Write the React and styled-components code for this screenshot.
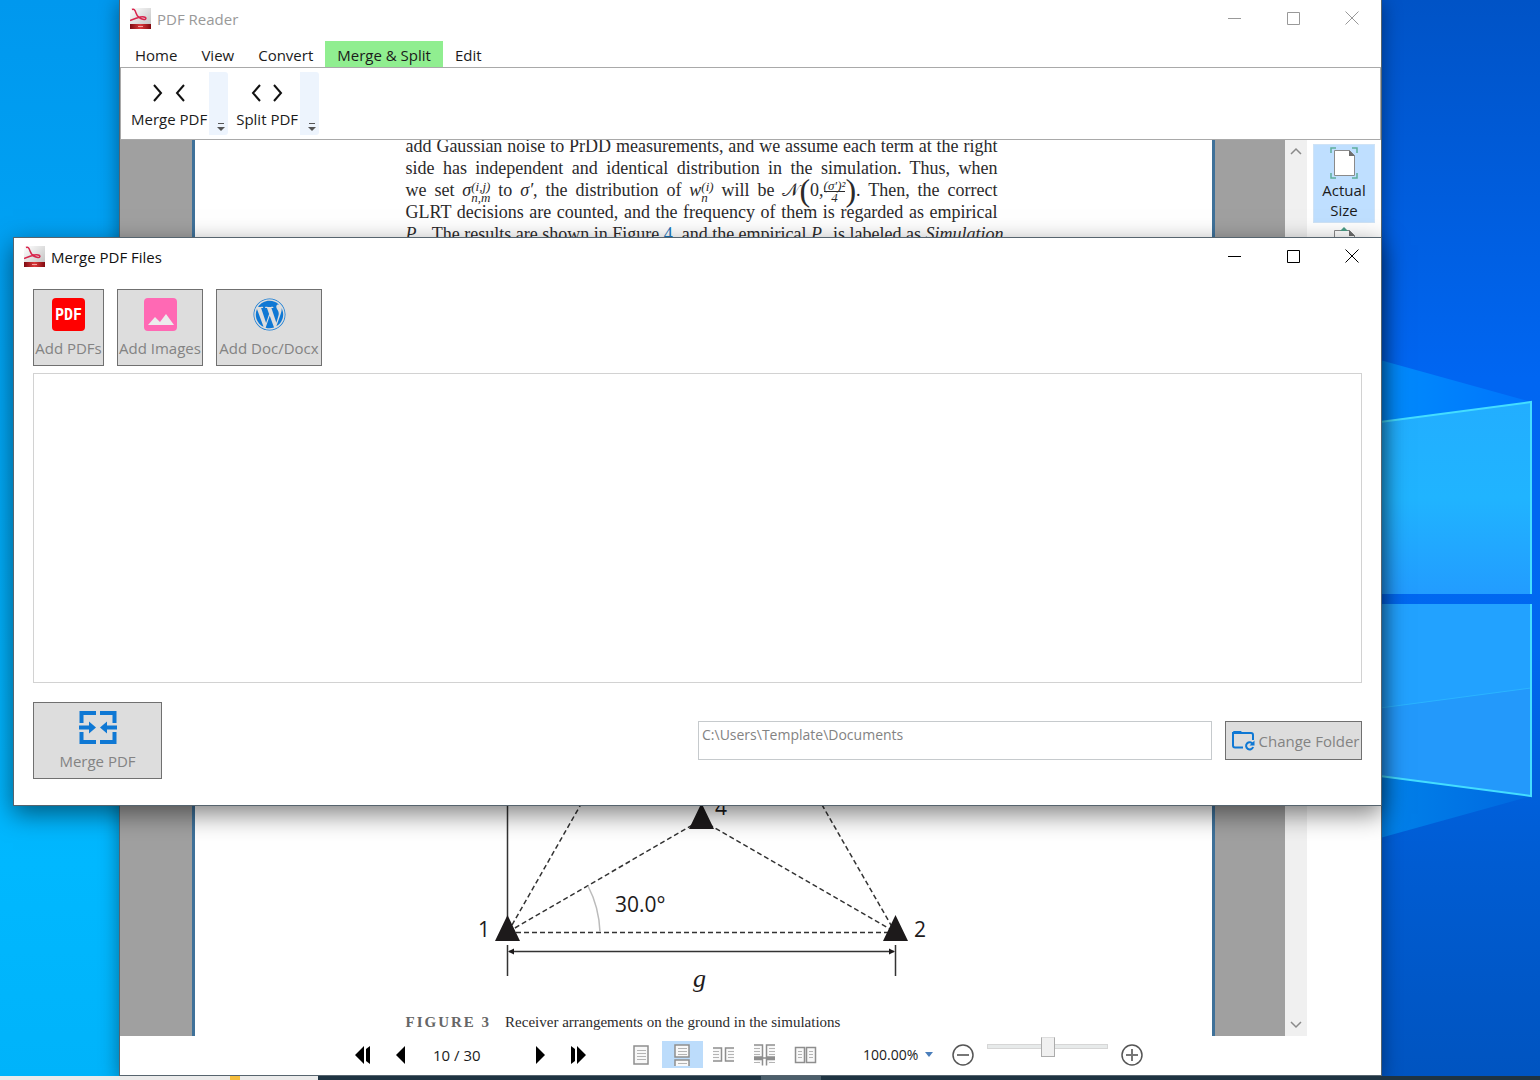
import React, { useState } from 'react'
import styled, { createGlobalStyle } from 'styled-components'
import { FaWordpress } from 'react-icons/fa'

const GlobalStyle = createGlobalStyle`
	* { box-sizing: border-box; }
	html, body, #root { height: 100%; }
	body { margin: 0; overflow: hidden; }
	body, button, input, select {
		font-family: "Open Sans", "Noto Sans", sans-serif;
		font-size: 15px;
		line-height: 20px;
	}
	button, input, select { color: inherit; }
`

const Desktop = styled.div`
	position: relative;
	display: flex;
	flex-direction: column;
	justify-content: flex-end;
	height: 100vh;
	overflow: hidden;
	color: #1b1b1b;
	background: #00a8f8;
`
const Wallpaper = styled.svg`
	position: absolute;
	inset: 0;
	width: 100%;
	height: 100%;
`
const Taskbar = styled.div`
	position: relative;
	display: flex;
	height: 4px;
	background: #1f3442;
`
const TaskSearch = styled.div`
	width: 318px;
	padding-left: 230px;
	background: #ebebeb;

	&::before {
		content: '';
		display: block;
		width: 10px;
		height: 4px;
		background: #f5bd3d;
	}
`
const TaskActive = styled.div`
	width: 60px;
	margin-left: 443px;
	background: #4c5f6b;
`

const Window = styled.section`
	position: absolute;
	display: flex;
	flex-direction: column;
	background: #fff;
	border: 1px solid #56646e;
	box-shadow: 0 4px 18px rgba(0, 0, 0, 0.4);
`
const ReaderWindow = styled(Window)`
	top: -1px;
	left: 119px;
	right: 158px;
	bottom: 4px;
`
const MergeWindow = styled(Window)`
	top: 237px;
	left: 13px;
	right: 158px;
	box-shadow: 0 8px 24px rgba(0, 0, 0, 0.5);
`

const TitleBar = styled.header`
	display: flex;
	align-items: center;
	height: 38px;
	padding-left: 10px;
	color: ${p => (p.$active ? '#111' : '#999')};
`
const Logo = styled.svg`
	margin-bottom: 2px;
`
const Title = styled.h1`
	flex: 1;
	margin: 0 0 0 6px;
	font-size: 15px;
	font-weight: 400;
`
const CaptionButton = styled.button`
	display: flex;
	align-items: center;
	align-self: flex-start;
	justify-content: center;
	width: 59px;
	height: 36px;
	padding: 0;
	border: 0;
	background: none;
`

const Tabs = styled.nav`
	display: flex;
	margin-top: 3px;
	padding-left: 3px;
`
const Tab = styled.button`
	height: 26px;
	padding: 2px 12px 0;
	border: 0;
	background: ${p => (p.$active ? '#90ee90' : 'none')};
`
const Ribbon = styled.div`
	display: flex;
	gap: 6px;
	padding: 4px 8px;
	border: 1px solid #a9a9a9;
`
const RibbonGroup = styled.div`
	display: flex;
`
const RibbonButton = styled.button`
	display: flex;
	flex-direction: column;
	align-items: center;
	justify-content: flex-end;
	gap: 7px;
	height: 63px;
	padding: 0 2px 6px;
	border: 0;
	background: none;
`
const Grip = styled.button`
	display: flex;
	align-items: flex-end;
	justify-content: center;
	width: 19px;
	padding: 0 0 4px 5px;
	border: 0;
	border-radius: 0 3px 3px 0;
	background: #edf4fd;
`

const Body = styled.div`
	display: flex;
	flex: 1;
	min-height: 0;
`
const Viewer = styled.div`
	display: flex;
	flex: 1;
	padding: 0 70px 0 72px;
	background: #a0a0a0;
`
const Page = styled.article`
	display: flex;
	flex: 1;
	flex-direction: column;
	align-items: center;
	padding-right: 4px;
	overflow: hidden;
	background: #fff;
	border: solid #3f7199;
	border-width: 0 3px;
	color: #2b2a2b;
	font-family: "Liberation Serif", serif;
`
const Paragraph = styled.div`
	width: 592px;
	margin-top: -5px;
	font-size: 18px;
	line-height: 22px;
`
const Line = styled.div`
	height: 22px;
	white-space: nowrap;
	text-align-last: justify;

	sub { font-size: 9px; }
`
const Ref = styled.a`
	color: #1b75bb;
	text-decoration: none;
`
const Stack = styled.span`
	display: inline-flex;
	flex-direction: column;
	vertical-align: middle;
	text-align-last: left;
	font-size: 13px;
	font-style: italic;
	line-height: 11px;
`
const Fraction = styled(Stack)`
	text-align-last: center;

	span:first-child { border-bottom: 1px solid #2b2a2b; }
`
const Paren = styled.span`
	display: inline-block;
	height: 22px;
	vertical-align: top;
	font-size: 32px;
	font-weight: 400;
`
const Figure = styled.figure`
	width: 592px;
	margin: auto 0 0;
	padding-bottom: 4px;
`
const Drawing = styled.svg`
	display: block;
	width: 100%;
	overflow: visible;
`
const Caption = styled.figcaption`
	display: flex;
	gap: 14px;
	padding-top: 2px;
	font-size: 15px;
	line-height: 20px;

	b {
		color: #666;
		letter-spacing: 2px;
	}
`
const ScrollBar = styled.div`
	display: flex;
	flex-direction: column;
	justify-content: space-between;
	width: 22px;
	background: #f0f0f0;
`
const ScrollButton = styled.button`
	display: flex;
	align-items: center;
	justify-content: center;
	height: 22px;
	padding: 0;
	border: 0;
	background: none;
`
const SidePanel = styled.aside`
	display: flex;
	flex-direction: column;
	gap: 1px;
	width: 74px;
	padding: 4px 6px 0;
	overflow: hidden;
`
const FitButton = styled.button`
	display: flex;
	flex-direction: column;
	align-items: center;
	gap: 1px;
	flex-shrink: 0;
	height: 79px;
	padding: 2px 0;
	border: 1px solid ${p => (p.$active ? '#cfe3f6' : 'transparent')};
	background: ${p => (p.$active ? '#bfdfff' : 'none')};
`

const StatusBar = styled.footer`
	display: flex;
	align-items: center;
	justify-content: center;
	height: 39px;
	padding: 0 12px 2px 0;
`
const NavButton = styled.button`
	display: flex;
	align-items: center;
	justify-content: center;
	width: 38px;
	height: 26px;
	padding: 0;
	border: 0;
	background: none;
`
const PageInput = styled.input`
	width: 101px;
	padding: 0 13px;
	border: 0;
`
const ViewModes = styled.div`
	display: flex;
	margin: 0 37px 0 24px;
`
const ViewButton = styled(NavButton)`
	width: 41px;
	height: 27px;
	background: ${p => (p.$active ? '#bcdcfb' : 'none')};
`
const ZoomPicker = styled.label`
	display: flex;
	align-items: center;
	gap: 2px;
	width: 74px;
	margin-right: 13px;

	select {
		width: 60px;
		padding: 0;
		border: 0;
		appearance: none;
		background: none;
		font-size: 14px;
	}
`
const RoundButton = styled(NavButton)`
	width: 26px;
`
const ZoomSlider = styled.input`
	align-self: flex-start;
	width: 121px;
	height: 20px;
	margin: 0 11px;
	appearance: none;
	background: none;

	&::-webkit-slider-runnable-track {
		height: 5px;
		border: 1px solid #d6d6d6;
		background: #e7eaea;
	}
	&::-webkit-slider-thumb {
		appearance: none;
		width: 14px;
		height: 20px;
		margin-top: -8px;
		border: 1px solid #acacac;
		border-top-color: #ddd;
		background: #f0f0f0;
	}
`

const MergeContent = styled.div`
	display: flex;
	flex-direction: column;
	padding: 13px 19px 26px;
	color: #838383;
`
const Sources = styled.div`
	display: flex;
	gap: 13px;
`
const TileButton = styled.button`
	display: flex;
	flex-direction: column;
	align-items: center;
	gap: 7px;
	min-width: ${p => p.$width};
	height: 77px;
	padding: 8px 0 0;
	border: 1px solid #707070;
	background: #ddd;
	white-space: nowrap;
`
const FileList = styled.div`
	height: 310px;
	margin: 7px 0 19px;
	border: 1px solid #d2d2d2;
	background: #fff;
`
const Output = styled.div`
	display: flex;
	align-items: center;
	gap: 13px;
`
const PathInput = styled.input`
	width: 514px;
	height: 39px;
	margin-left: auto;
	padding: 2px 3px 14px;
	border: 1px solid #c6cacd;
	background: #fff;
	font-size: 14px;
`
const FolderButton = styled.button`
	display: flex;
	align-items: center;
	justify-content: center;
	gap: 4px;
	width: 137px;
	height: 39px;
	padding: 0 0 0 4px;
	border: 1px solid #707070;
	background: #ddd;
	white-space: nowrap;
`

const AppLogo = () => (
	<Logo width="21" height="21" viewBox="0 0 21 21" aria-hidden="true">
		<defs>
			<linearGradient id="logoPaper" x1="0" y1="0" x2="1" y2="1">
				<stop offset="0" stopColor="#fff" />
				<stop offset="1" stopColor="#bdbdbd" />
			</linearGradient>
			<linearGradient id="logoBand" x1="0" y1="0" x2="1" y2="0">
				<stop offset="0" stopColor="#7d0b12" />
				<stop offset="0.5" stopColor="#dc3a3c" />
				<stop offset="1" stopColor="#80090f" />
			</linearGradient>
		</defs>
		<rect width="21" height="21" fill="url(#logoPaper)" />
		<rect y="16" width="21" height="5" fill="url(#logoBand)" />
		<path d="M8 18.5h5" stroke="#f3a5a5" />
		<path
			d="M2 1.5c2-1 3 .5 4 3.5s4 6 8 6.500c2 .2 2.500-1.500 1-2.200s-5-.3-8 .7-5 1.500-7 2.500"
			fill="none"
			stroke="#d8244c"
			strokeWidth="1.5"
		/>
	</Logo>
)

const WindowControls = ({ color }) => (
	<>
		<CaptionButton aria-label="Minimize">
			<svg width="14" height="14" stroke={color}>
				<path d="M1 7.5h13" />
			</svg>
		</CaptionButton>
		<CaptionButton aria-label="Maximize">
			<svg width="14" height="14" fill="none" stroke={color}>
				<path d="M1.5 1.5h12v12h-12z" />
			</svg>
		</CaptionButton>
		<CaptionButton aria-label="Close">
			<svg width="14" height="14" stroke={color}>
				<path d="M.5 .5l13 13M13.5 .5l-13 13" />
			</svg>
		</CaptionButton>
	</>
)

const Chevrons = ({ d }) => (
	<svg width="34" height="18" fill="none" stroke="#111" strokeWidth="2" aria-hidden="true">
		<path d={d} />
	</svg>
)

const OverflowGrip = () => (
	<Grip aria-label="Toolbar options">
		<svg width="8" height="8" fill="#555">
			<path d="M1 0h6v1H1zM0 4h8L4 8z" />
		</svg>
	</Grip>
)

const FitIcon = () => (
	<svg width="28" height="32" fill="none" aria-hidden="true">
		<path d="M1 6V1h5M22 1h5v5M27 26v5h-5M6 31H1v-5" stroke="#5fae9c" strokeWidth="1.5" />
		<path d="M4.5 3.5h15l5 5v20h-20z" fill="#fff" stroke="#8a8a8a" />
		<path d="M19 3v6h6z" fill="#6e6e6e" />
	</svg>
)

const FitPageIcon = () => (
	<svg width="28" height="32" fill="none" aria-hidden="true">
		<path d="M4.5 3.5h15l5 5v20h-20z" fill="#fff" stroke="#8a8a8a" />
		<path d="M19 3v6h6z" fill="#6e6e6e" />
		<path d="M10 4l4-4 4 4z" fill="#4b9c86" />
	</svg>
)

const PdfIcon = () => (
	<svg width="33" height="33" aria-hidden="true">
		<rect width="33" height="33" rx="4" fill="#f00" />
		<text
			x="16.5"
			y="22"
			textAnchor="middle"
			fill="#fff"
			fontFamily="DejaVu Sans Mono"
			fontSize="15"
			fontWeight="700"
		>
			PDF
		</text>
	</svg>
)

const ImageIcon = () => (
	<svg width="33" height="33" aria-hidden="true">
		<rect width="33" height="33" rx="4" fill="#ff69b4" />
		<path d="M4 27l7-8 5 5 6-8 8 11z" fill="#ececec" />
	</svg>
)

const MergeIcon = () => (
	<svg width="38" height="33" fill="none" stroke="#0f78d4" strokeWidth="4" aria-hidden="true">
		<path d="M17 2H2.5v10M2.5 21v10H17M21 2h14.5v10M35.5 21v10H21" />
		<path d="M0 16.5h11M38 16.5H27" />
		<path d="M10 10.5l7 6-7 6zM28 10.5l-7 6 7 6z" fill="#0f78d4" stroke="none" />
	</svg>
)

const FolderIcon = () => (
	<svg width="23" height="21" viewBox="0 0 23 21" fill="none" stroke="#0f78d4" strokeWidth="2" aria-hidden="true">
		<path d="M11 17.5H3a2 2 0 0 1-2-2V3h18a2 2 0 0 1 2 2v5" />
		<path d="M1 4V2a1 1 0 0 1 1-1h7l2.5 3z" fill="#0f78d4" stroke="none" />
		<path d="M20.8 14a3.6 3.6 0 1 0 .3 3" />
		<path d="M22.5 10.5v5h-5z" fill="#0f78d4" stroke="none" />
	</svg>
)

// outline is the page edge, lines are the rows of text on it
const viewModes = [
	{
		label: 'Single page',
		outline: 'M4 2h14v18H4z',
		lines: 'M7 6.5h9M7 9.5h9M7 12.5h9M7 15.5h9'
	},
	{
		label: 'Continuous',
		outline: 'M4 1h14v12H4zM4 22v-6h14v6',
		lines: 'M7 4.5h9M7 7.5h9M7 10.5h9M7 19.5h9'
	},
	{
		label: 'Facing',
		outline: 'M1 4h8.5v13H1M22 4h-8.5v13H22',
		lines: 'M1 7.5h6M1 10.5h6M1 13.5h6M16 7.5h6M16 10.5h6M16 13.5h6'
	},
	{
		label: 'Continuous facing',
		outline: 'M1 1h8.5v12H1M22 1h-8.5v12H22M1 15.5h8.5v6M22 15.5h-8.5v6M1 14h21',
		lines: 'M1 4.5h6M1 7.5h6M1 10.5h6M16 4.5h6M16 7.5h6M16 10.5h6M1 18.5h6M16 18.5h6'
	},
	{
		label: 'Book view',
		outline: 'M1.5 3.5h9v15h-9zM12.5 3.5h9v15h-9z',
		lines: 'M4 7.5h4M4 10.5h4M4 13.5h4M15 7.5h4M15 10.5h4M15 13.5h4'
	}
]

const PaperFigure = () => (
	<Drawing viewBox="406 594 592 416" fill="none" stroke="#333" strokeWidth="1.5">
		<path d="M507.5 594v330M507.5 945v31M895.5 945v31" />
		<path d="M508 932L701 594 895 932M508 932L701 820 895 932M508 932.5H895" strokeDasharray="5 3" />
		<path d="M588 886Q599 907 600 932" stroke="#bbb" />
		<path d="M509 951.5H894" />
		<g fill="#1d1a1b" stroke="none">
			<path d="M507.5 915l12.5 26h-25zM895.5 915l12.5 26h-25zM701.5 803l12.5 26h-25z" />
			<path d="M508 951.5l6-3v6zM895 951.5l-6-3v6z" />
			<g fontFamily="Open Sans" fontSize="21">
				<text x="478" y="937">1</text>
				<text x="914" y="937">2</text>
				<text x="715" y="815">4</text>
				<text x="615" y="912">30.0°</text>
			</g>
			<text x="693" y="987" fontFamily="Liberation Serif" fontSize="26" fontStyle="italic">
				g
			</text>
		</g>
	</Drawing>
)

const Document = () => (
	<Page>
		<Paragraph>
			<Line>add Gaussian noise to PrDD measurements, and we assume each term at the right</Line>
			<Line>side has independent and identical distribution in the simulation. Thus, when</Line>
			<Line>
				we set <i>σ</i>
				<Stack>
					<span>(i,j)</span>
					<span>n,m</span>
				</Stack>{' '}
				to <i>σ′</i>, the distribution of <i>w</i>
				<Stack>
					<span>(i)</span>
					<span>n</span>
				</Stack>{' '}
				will be 𝒩<Paren>(</Paren>0,
				<Fraction>
					<span>(σ′)²</span>
					<span>4</span>
				</Fraction>
				<Paren>)</Paren>. Then, the correct
			</Line>
			<Line>GLRT decisions are counted, and the frequency of them is regarded as empirical</Line>
			<Line>
				<i>P</i>
				<sub>D</sub>. The results are shown in Figure <Ref href="#figure-4">4</Ref>, and the empirical <i>P</i>
				<sub>D</sub> is labeled as <i>Simulation</i>
			</Line>
		</Paragraph>
		<Figure>
			<PaperFigure />
			<Caption>
				<b>FIGURE 3</b>
				<span>Receiver arrangements on the ground in the simulations</span>
			</Caption>
		</Figure>
	</Page>
)

const Reader = () => {
	const [mode, setMode] = useState('Continuous')
	return (
		<ReaderWindow aria-label="PDF Reader">
			<TitleBar>
				<AppLogo />
				<Title>PDF Reader</Title>
				<WindowControls color="#999" />
			</TitleBar>
			<Tabs>
				{['Home', 'View', 'Convert', 'Merge & Split', 'Edit'].map(tab => (
					<Tab key={tab} $active={tab === 'Merge & Split'}>
						{tab}
					</Tab>
				))}
			</Tabs>
			<Ribbon>
				<RibbonGroup>
					<RibbonButton>
						<Chevrons d="M2 1l7 8-7 8M32 1l-7 8 7 8" />
						Merge PDF
					</RibbonButton>
					<OverflowGrip />
				</RibbonGroup>
				<RibbonGroup>
					<RibbonButton>
						<Chevrons d="M10 1L3 9l7 8M24 1l7 8-7 8" />
						Split PDF
					</RibbonButton>
					<OverflowGrip />
				</RibbonGroup>
			</Ribbon>
			<Body>
				<Viewer>
					<Document />
				</Viewer>
				<ScrollBar>
					<ScrollButton aria-label="Scroll up">
						<svg width="12" height="8" fill="none" stroke="#8a8a8a" strokeWidth="1.5">
							<path d="M1 7l5-5 5 5" />
						</svg>
					</ScrollButton>
					<ScrollButton aria-label="Scroll down">
						<svg width="12" height="8" fill="none" stroke="#8a8a8a" strokeWidth="1.5">
							<path d="M1 1l5 5 5-5" />
						</svg>
					</ScrollButton>
				</ScrollBar>
				<SidePanel>
					<FitButton $active>
						<FitIcon />
						Actual Size
					</FitButton>
					<FitButton aria-label="Fit page">
						<FitPageIcon />
					</FitButton>
				</SidePanel>
			</Body>
			<StatusBar>
				<NavButton aria-label="First page">
					<svg width="16" height="18">
						<path d="M0 9l9-9v18zM11 3l4-3v18l-4-3z" />
					</svg>
				</NavButton>
				<NavButton aria-label="Previous page">
					<svg width="10" height="18">
						<path d="M0 9l9-9v18z" />
					</svg>
				</NavButton>
				<PageInput aria-label="Page" defaultValue="10 / 30" />
				<NavButton aria-label="Next page">
					<svg width="10" height="18">
						<path d="M10 9L1 0v18z" />
					</svg>
				</NavButton>
				<NavButton aria-label="Last page">
					<svg width="16" height="18">
						<path d="M16 9L7 0v18zM5 3L1 0v18l4-3z" />
					</svg>
				</NavButton>
				<ViewModes>
					{viewModes.map(({ label, outline, lines }) => (
						<ViewButton
							key={label}
							aria-label={label}
							$active={label === mode}
							onClick={() => setMode(label)}
						>
							<svg width="23" height="22" fill="none">
								<path d={outline} fill="#f8f8f8" stroke="#8e8e8e" strokeWidth="1.5" />
								<path d={lines} stroke="#b4b4b4" />
							</svg>
						</ViewButton>
					))}
				</ViewModes>
				<ZoomPicker>
					<select aria-label="Zoom">
						<option>100.00%</option>
					</select>
					<svg width="8" height="5" fill="#4a7ebb">
						<path d="M0 0h8L4 5z" />
					</svg>
				</ZoomPicker>
				<RoundButton aria-label="Zoom out">
					<svg width="22" height="22" fill="none" stroke="#555" strokeWidth="1.5">
						<circle cx="11" cy="11" r="10" />
						<path d="M5 11h12" strokeWidth="2" stroke="#777" />
					</svg>
				</RoundButton>
				<ZoomSlider type="range" aria-label="Zoom level" defaultValue="50" />
				<RoundButton aria-label="Zoom in">
					<svg width="22" height="22" fill="none" stroke="#555" strokeWidth="1.5">
						<circle cx="11" cy="11" r="10" />
						<path d="M5 11h12M11 5v12" strokeWidth="2" stroke="#777" />
					</svg>
				</RoundButton>
			</StatusBar>
		</ReaderWindow>
	)
}

const MergeDialog = () => (
	<MergeWindow role="dialog" aria-label="Merge PDF Files">
		<TitleBar $active>
			<AppLogo />
			<Title>Merge PDF Files</Title>
			<WindowControls color="#000" />
		</TitleBar>
		<MergeContent>
			<Sources>
				<TileButton $width="71px">
					<PdfIcon />
					Add PDFs
				</TileButton>
				<TileButton $width="86px">
					<ImageIcon />
					Add Images
				</TileButton>
				<TileButton $width="106px">
					<FaWordpress size={33} color="#0f78d4" />
					Add Doc/Docx
				</TileButton>
			</Sources>
			<FileList />
			<Output>
				<TileButton $width="129px">
					<MergeIcon />
					Merge PDF
				</TileButton>
				<PathInput aria-label="Output folder" defaultValue="C:\Users\Template\Documents" />
				<FolderButton>
					<FolderIcon />
					Change Folder
				</FolderButton>
			</Output>
		</MergeContent>
	</MergeWindow>
)

const App = () => (
	<Desktop>
		<GlobalStyle />
		<Wallpaper viewBox="0 0 1540 1080" preserveAspectRatio="none" aria-hidden="true">
			<defs>
				<linearGradient id="leftSky" x1="0" y1="0" x2="0" y2="1">
					<stop offset="0" stopColor="#0098ee" />
					<stop offset="0.8" stopColor="#00b8ff" />
					<stop offset="1" stopColor="#00b3fa" />
				</linearGradient>
				<linearGradient id="rightSky" x1="0" y1="0" x2="0" y2="1">
					<stop offset="0" stopColor="#0053c6" />
					<stop offset="0.35" stopColor="#0066f2" />
					<stop offset="0.6" stopColor="#0068f0" />
					<stop offset="0.8" stopColor="#005cd2" />
					<stop offset="1" stopColor="#0054c0" />
				</linearGradient>
				<linearGradient id="flare" x1="0" y1="0" x2="1" y2="0">
					<stop offset="0" stopColor="#008cfc" />
					<stop offset="1" stopColor="#0074fc" />
				</linearGradient>
				<linearGradient id="lowerFlare" x1="0" y1="0" x2="1" y2="0">
					<stop offset="0" stopColor="#0082ea" />
					<stop offset="1" stopColor="#0068e0" />
				</linearGradient>
				<linearGradient id="pane" x1="0" y1="0" x2="0" y2="1">
					<stop offset="0" stopColor="#22aeff" />
					<stop offset="0.5" stopColor="#20b4ff" />
					<stop offset="1" stopColor="#229cff" />
				</linearGradient>
			</defs>
			<rect width="700" height="1080" fill="url(#leftSky)" />
			<rect x="700" width="840" height="1080" fill="url(#rightSky)" />
			<path d="M1380 360L1531 402 1380 422z" fill="url(#flare)" />
			<path d="M1380 776L1531 796 1380 838z" fill="url(#lowerFlare)" />
			<path d="M1380 422L1531 402V594H1380z" fill="url(#pane)" />
			<path d="M1380 604H1531V796L1380 776z" fill="#2399fb" />
			<path d="M1380 604H1531V688L1380 708z" fill="#22a2ff" />
			<path d="M1380 708L1531 688" stroke="#2bb4ff" />
			<path d="M1380 422L1531 402V594M1531 604V796L1380 776" fill="none" stroke="#44ddff" strokeWidth="2" />
		</Wallpaper>
		<Reader />
		<MergeDialog />
		<Taskbar>
			<TaskSearch />
			<TaskActive />
		</Taskbar>
	</Desktop>
)

export default App
